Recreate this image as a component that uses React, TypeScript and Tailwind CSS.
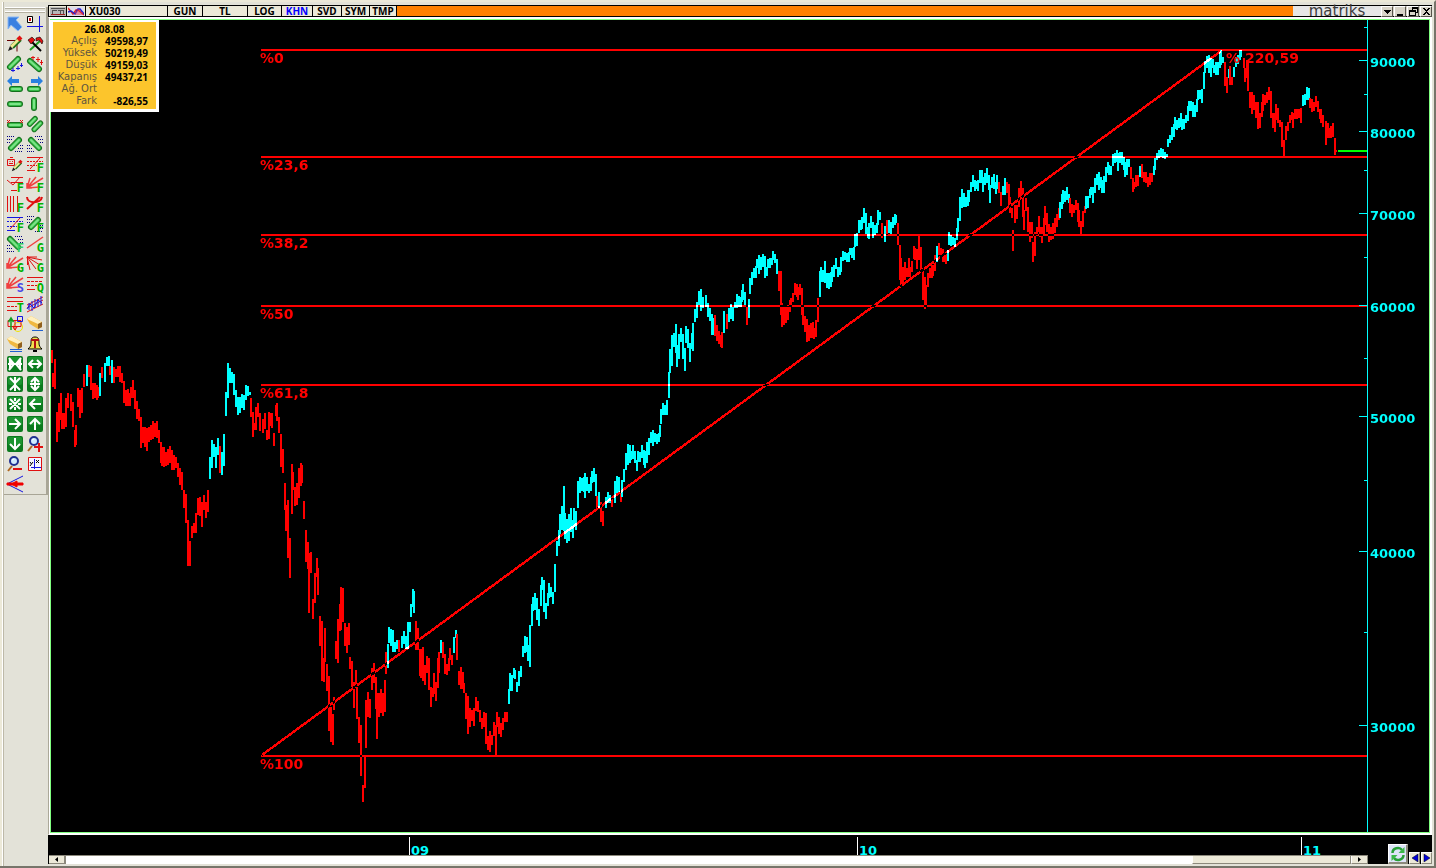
import type { ReactNode } from "react";

/* Each run is a colour letter (R falling, C rising) followed by "x,high,low" bars. */
const RUNS = `
R 51,350,363 52,373,387 54,359,389 56,412,442 58,403,432 60,393,420 61,413,429 63,413,429 65,398,427 67,393,408 70,394,411 72,402,427 74,430,447 75,425,445 77,388,407 79,390,418 81,388,413 83,374,387
C 86,365,386
R 88,365,377 90,366,390 92,383,399 94,383,398 96,385,400 97,387,398
C 99,373,396
R 101,367,378
C 104,363,382 106,357,366 108,356,366
R 109,366,375
C 111,360,383
R 113,367,383 115,369,377 117,366,377 119,366,382 121,373,383 123,381,403 125,390,406 127,389,406 129,393,406 130,387,398 132,380,398 134,390,409 136,401,419 138,409,421 140,417,448 142,427,443 144,427,447 146,428,451 148,427,442 150,425,440 152,421,439 154,423,437 156,421,438 158,430,443 160,442,463 161,447,466 163,447,467 165,452,466 167,449,465 169,446,463 171,450,470 173,455,470 175,457,468 177,463,477 179,468,485 181,472,490 183,490,508 185,494,523 187,520,566 189,541,566 191,526,538 193,523,533 195,513,533 197,498,515 199,497,516 201,502,527 203,495,510 205,502,518 207,490,512
C 209,457,479 211,440,468 213,444,457 215,447,468 217,438,455
R 219,446,473
C 221,452,475 223,434,466 225,392,416 227,363,398 229,368,383 231,372,383 233,374,395 235,390,407 237,397,415 239,397,413 241,394,408 243,395,410 245,385,400 247,386,396 249,392,395
R 250,398,417 252,412,437 254,423,430 255,407,430 257,403,417 259,413,431 262,419,433 264,413,429 266,430,440 268,412,439 270,413,426 271,413,428 273,433,446 275,405,416 276,403,421 278,417,433 280,434,467 282,449,473 284,483,510 285,505,531 287,500,558 289,538,578 291,464,514 292,472,490 294,487,506 296,483,505 298,468,498 300,463,486 301,465,483 303,501,519 305,530,562 307,542,569 308,553,613 310,552,573 312,599,619 314,573,603 316,558,577 317,568,595 319,616,646 321,621,681 323,658,682 324,628,662 326,664,691 328,676,731 330,707,742 332,714,745 333,697,710 335,641,659 337,619,663 339,604,631 340,587,630 342,588,622 344,623,646 346,627,653 348,623,645 349,657,669 351,661,687 353,682,708 355,670,687 356,687,719 358,717,743 360,725,776 362,785,802 364,757,788 365,700,748 367,692,717 369,699,718 371,668,690 373,663,683 375,677,709 376,693,739 378,693,717 380,689,713 382,693,716 384,680,712 385,652,674
C 387,644,668 388,627,643 390,629,646 392,630,652 394,642,652 396,640,649
R 398,640,652
C 401,636,648 403,631,644 405,636,649 407,622,649 409,622,632 410,604,617 412,589,607 413,591,613
R 415,621,650 417,628,650 419,649,676 420,649,678 422,647,681 424,665,685 426,656,673 428,658,690 430,687,707 432,688,697 433,673,694 435,682,701 437,658,688 438,652,673
C 440,640,653
R 442,642,658 444,654,674 446,664,675 448,658,671 449,648,660 451,655,665
C 453,637,653 455,630,638
R 456,634,660 458,671,685 460,667,689 462,672,689 463,683,693 465,693,719 467,696,734 469,708,727 471,710,721 473,708,726 475,697,711 477,701,712 479,710,722 481,718,729 483,712,727 485,713,744 487,736,750 489,731,752 491,735,745 493,722,736 495,725,755 496,712,727 498,717,734 500,723,737 502,718,730 504,712,722 506,712,722
C 508,689,704 509,673,691 511,675,691 513,668,678 514,670,679 516,682,692 518,671,686 520,666,677 522,646,657 524,636,653 526,637,652 527,645,661 529,625,667 531,604,626 532,597,611 534,593,610 536,598,620 538,609,626 540,585,606 541,577,590 543,580,612 545,603,619 547,593,606 548,583,598 550,587,597 552,592,604 554,564,592 556,541,556 558,530,546 559,514,534 561,506,530 563,486,531 564,513,539 566,519,543 568,514,541 570,508,532 572,520,538 573,508,527 575,511,530 577,481,508 579,477,493 581,478,491 583,477,492 584,473,498 586,477,491 588,484,493 590,477,491 591,471,483 593,468,482 595,474,496
R 596,496,508
C 598,492,508
R 600,502,522 602,511,526
C 605,497,508 607,492,503 609,495,503
R 611,498,507
C 614,481,503 616,476,493 618,477,492
R 620,490,502
C 621,480,497 623,469,482 625,453,470 627,444,465 629,445,463 630,451,460 632,445,459 634,451,463 636,460,471 637,451,462 639,452,462 641,445,458 643,450,465 644,451,468 646,442,463 648,438,455 650,432,443 652,430,446 654,433,442 656,434,444 658,433,442 659,425,437 660,409,424 662,403,415 664,405,415 666,400,415 668,372,398 669,349,373 671,335,366 673,333,347 675,324,353 676,345,367 678,334,359 680,328,342 682,334,359 684,348,371 685,326,343 687,329,348 689,343,362 691,333,349 692,323,351 694,309,322 696,302,318 698,291,305 700,289,311 702,297,308 705,295,307 707,303,317 709,308,321 711,314,335 713,318,335
R 714,315,336 716,325,341 718,331,344 720,335,347 721,332,348
C 723,311,333
R 726,314,329
C 728,308,322 730,304,319 732,307,321 734,302,308 736,294,308 738,296,307 740,297,307 741,290,302 742,284,300 744,292,305
R 746,305,325
C 748,299,318 749,278,294 751,272,285 753,268,278 755,266,278 756,259,268 758,255,274 760,257,270 762,254,267 764,256,278 766,267,276 767,259,268 769,258,268 771,258,265 772,251,260 774,254,263 776,259,274
R 778,271,291 780,271,315 781,303,327 783,305,325 785,305,323 787,306,320 789,300,312 790,298,307 792,293,302 794,283,295 796,284,297 797,287,300 799,284,295 801,288,315 802,305,325 804,316,332 806,319,342 808,325,341 810,323,338 812,322,338 813,328,339 815,320,337 817,298,322
C 819,271,297 820,267,282 822,270,282 824,261,283 826,273,288 828,273,289 830,272,287 831,267,282 833,265,277 835,258,269 837,267,277 839,267,275 840,257,272 842,251,261 844,252,260 846,253,262 848,252,262 849,248,255 851,248,258 853,247,260 854,234,247 856,233,246 858,220,233 860,220,230 861,217,229 863,208,223 865,213,234 867,227,238 868,223,239 870,216,228 872,222,238 874,225,235 876,223,233 877,210,225 879,212,220
R 881,223,238
C 884,226,242
R 886,220,235
C 888,220,233 890,222,234 892,217,228 894,214,225 895,215,223
R 897,223,245 899,245,280 900,258,287 902,267,283 904,262,280 906,268,277 908,258,277 909,267,277 911,261,272 913,246,259 914,248,260 916,249,269 918,236,260 920,247,272 922,268,300 924,277,309 925,285,307 927,273,287 929,268,278 931,265,278 932,265,276 934,255,271
C 936,246,262
R 938,243,255 940,248,258 942,249,262 943,252,262 945,253,264
C 947,250,261 948,232,245 950,235,246 952,237,245 954,238,247 956,228,240 957,218,232 959,197,221 961,189,208 963,193,207 965,197,207 967,190,206 968,190,202 970,182,192 972,175,187 974,180,191 976,181,189 977,180,191 979,170,183 981,170,183 982,177,192 984,173,185 986,168,183 988,175,190 989,185,203 991,177,188 993,174,189 995,182,194 996,175,189
R 998,182,193 1000,192,206
C 1002,186,195 1004,178,195
R 1006,182,193 1008,184,205 1009,197,213 1011,208,218 1012,230,251 1014,205,223 1016,205,219 1018,188,207 1020,181,197 1022,188,217 1023,210,230 1025,198,211 1027,207,232 1029,222,242 1031,222,238 1032,242,262 1034,232,256 1036,227,235 1038,216,232 1039,227,237 1041,227,243 1043,218,234 1044,206,225 1046,213,232 1048,224,242 1050,227,240 1052,223,239 1054,218,233 1056,214,227 1058,208,220
C 1059,202,218 1061,194,209 1062,190,204 1064,191,202 1066,187,200 1068,194,203
R 1069,198,213 1071,204,217 1073,205,213 1075,200,210 1077,203,222 1078,210,227 1080,221,234 1082,211,227 1084,206,213
C 1085,196,209 1087,196,208 1089,189,198 1090,187,195 1092,187,203 1094,178,193 1096,174,185 1098,172,190 1100,177,188 1101,180,193 1103,176,193 1105,167,182 1107,162,173 1108,165,175 1110,166,175 1112,154,166 1114,153,163 1116,150,162 1117,153,171 1119,152,163 1121,152,165 1123,157,170 1124,162,177 1126,159,175 1128,159,167
R 1130,167,179 1132,178,192 1133,182,189 1135,175,187 1137,175,186
C 1139,166,177
R 1141,164,178 1143,172,182 1145,172,183 1147,177,187 1149,173,185 1151,173,182
C 1153,166,175 1154,158,170 1156,153,160 1158,150,158 1160,148,157 1162,149,158 1164,152,159 1166,154,157 1167,139,147 1169,135,143 1171,127,140 1173,124,137 1174,117,129 1176,120,130 1178,118,128 1180,113,127 1181,119,130 1183,119,129 1185,115,123 1187,106,121 1188,101,111 1190,101,111 1192,102,117 1194,105,117 1196,99,112 1197,90,100 1199,90,99 1201,89,103 1203,72,89 1204,61,73 1206,56,68 1208,55,73 1210,58,77 1212,59,68 1213,65,73 1215,62,75 1217,62,75 1219,52,68 1220,50,65 1222,57,63
R 1224,62,86 1226,77,93
C 1228,69,78
R 1229,66,85 1231,77,85
C 1233,67,77 1235,57,67 1237,55,64 1239,50,60 1240,50,57
R 1243,58,68 1244,68,82 1246,60,78 1247,60,91 1249,92,108 1251,92,114 1253,95,110 1255,102,118 1257,102,129 1259,113,128 1261,102,117 1262,94,111 1264,95,105 1266,92,103 1268,87,100 1270,91,118 1272,113,128 1274,113,132 1275,104,120 1277,108,123 1279,120,127 1281,122,147 1283,140,156 1285,126,140 1287,122,131 1289,115,123 1291,112,120 1292,113,128 1294,109,119 1296,109,119 1298,109,118 1300,108,123
C 1302,95,106 1304,94,105 1306,87,100 1308,88,100
R 1309,98,108 1311,99,112 1313,102,111 1315,96,107 1317,101,112 1319,109,119 1320,109,123 1322,115,127 1325,121,145 1327,123,138 1329,128,138 1330,126,138 1332,123,137 1334,138,155 1335,150,152`;

const bars = RUNS.trim()
  .split("\n")
  .map((line) => {
    const [tone, ...items] = line.split(" ");
    const d = items
      .map((item) => {
        const [x, hi, lo] = item.split(",").map(Number);
        return `M${x} ${hi}h2V${lo}h-2z`;
      })
      .join("");
    return { fill: tone === "R" ? "#ff0000" : "#00ffff", d };
  });

const levels = [
  { y: 50, label: "%0" },
  { y: 157, label: "%23,6" },
  { y: 235, label: "%38,2" },
  { y: 306, label: "%50" },
  { y: 385, label: "%61,8" },
  { y: 756, label: "%100" },
];

const prices = [
  { y: 60, label: "90000" },
  { y: 131, label: "80000" },
  { y: 213, label: "70000" },
  { y: 305, label: "60000" },
  { y: 416, label: "50000" },
  { y: 551, label: "40000" },
  { y: 725, label: "30000" },
];
const minorTicks = [27, 94, 170, 257, 358, 480, 632];

const years = [
  { x: 409, label: "09" },
  { x: 857, label: "10" },
  { x: 1301, label: "11" },
];

const quote = [
  ["Açılış", "49598,97"],
  ["Yüksek", "50219,49"],
  ["Düşük", "49159,03"],
  ["Kapanış", "49437,21"],
  ["Ağ. Ort", ""],
  ["Fark", "-826,55"],
];

/* ---------- toolbar drawings, all on a 16x16 grid ---------- */

const RED = "#e01010";
const BLUE = "#1414e0";

function Stick({ d }: { d: string }) {
  return (
    <g fill="none" strokeLinecap="round">
      <path d={d} stroke="#14701c" strokeWidth="6" />
      <path d={d} stroke="#34b844" strokeWidth="4" />
      <path d={d} stroke="#7ce488" strokeWidth="2" />
    </g>
  );
}

function Mark({ children, fill = "#00b400" }: { children: string; fill?: string }) {
  return (
    <text x="17" y="16" textAnchor="end" fontFamily="DejaVu Sans Mono, monospace" fontWeight="700" fontSize="12" fill={fill}>
      {children}
    </text>
  );
}

function Dots({ d }: { d: string }) {
  return <path d={d} stroke="#000080" strokeWidth="1" strokeDasharray="1 1" fill="none" shapeRendering="crispEdges" />;
}

function Tile({ d }: { d: string }) {
  return (
    <>
      <rect width="16" height="16" rx="2" fill="#0b7a1e" />
      <rect x="1" y="1" width="14" height="8" rx="2" fill="#1c9430" />
      <path d={d} stroke="#ffffff" strokeWidth="2" fill="none" />
    </>
  );
}

const upRight = "M4 12L12 4";
const downRight = "M4 4L12 12";
const upDots = <Dots d="M0 .5h8M0 3.5h5M0 6.5h3M13 9.5h3M11 12.5h5M8 15.5h8" />;
const downDots = <Dots d="M8 .5h8M11 3.5h5M13 6.5h3M0 9.5h3M0 12.5h5M0 15.5h8" />;
const fan = <path d="M0 12L16 2M0 12L9 1M0 12L3 2M0 12L13 11M0 7v5h5" stroke="#f04040" strokeWidth="1.5" fill="none" />;

const pencil = (
  <>
    <path d="M5 11L13 3" stroke="#187018" strokeWidth="5" />
    <path d="M4 11L12 3" stroke="#f0e890" strokeWidth="3" />
    <path d="M11 4l3-3" stroke={RED} strokeWidth="4" />
    <path d="M1 15l2-5 3 3z" fill="#202020" />
  </>
);

const eraser = (
  <>
    <path d="M0 3l4-3 11 6v5l-4 2-8-5z" fill="#f0b840" />
    <path d="M0 3l4-3 11 6-4 2z" fill="#fff0c0" />
    <path d="M11 8l4-2v5l-4 2z" fill="#906020" />
  </>
);

const lens = (
  <>
    <path d="M5 10l-4 5" stroke="#b06820" strokeWidth="2" />
    <circle cx="7" cy="5" r="4" fill="#d0ecff" stroke="#203090" strokeWidth="2" />
    <path d="M5 4l2-1" stroke="#ffffff" strokeWidth="1" />
  </>
);

const tools: [string, ReactNode][] = [
  ["Seçim", <path d="M1 1h11l-3 3 6 7-4 4-7-6-3 4z" fill="#3a80e0" stroke="#8ab8f4" />],
  ["İmleç", <><path d="M.5 .5h5v6h-5z" fill="#fff" stroke="#000" /><path d="M3 2v3" stroke={RED} strokeWidth="2" /><path d="M12.5 0v16M0 10.5h16" stroke={BLUE} /></>],
  ["Kalem", <><path d="M0 4.5h10v11" stroke="#600" fill="none" />{pencil}</>],
  ["Araçlar", <><path d="M3 14L13 5" stroke="#20a020" strokeWidth="2" /><path d="M4 5l10 10" stroke="#000" strokeWidth="2" /><path d="M1 4l4-3 3 3-4 4zM9 2l4-1 3 4-1 3-3-4-3 1z" fill={RED} stroke="#000" strokeWidth=".6" /></>],
  ["Yükselen kanal", <><Stick d="M3 11L11 3" /><path d="M4 14.500h4M6 12v4M9 12.500h4M11 10v4M13 9.500h3M14.500 7v4" stroke={BLUE} /></>],
  ["Düşen kanal", <><Stick d="M3 5L12 13" /><path d="M4 1.500h4M6 0v4M9 3.500h4M11 1v5M13 6.500h3M14.500 4v5" stroke={RED} /></>],
  ["Sola uzat", <><Stick d="M5 13h8" /><path d="M0 5l5-5v3h7v4h-7v3z" fill="#2a80e0" /></>],
  ["Sağa uzat", <><Stick d="M3 13h8" /><path d="M16 5l-5-5v3h-7v4h7v3z" fill="#2a80e0" /></>],
  ["Yatay çizgi", <Stick d="M3 8h10" />],
  ["Dikey çizgi", <Stick d="M7 4v8" />],
  ["Doğru parçası", <><Stick d="M3 9h10" /><path d="M0 4l3 3M3 4l-3 3M13 4l3 3M16 4l-3 3" stroke={RED} /></>],
  ["Paralel çizgi", <g transform="scale(.9)"><Stick d="M3 9L9 3" /><Stick d="M8 15L15 8" /></g>],
  ["Yükselen bant", <>{upDots}<Stick d={upRight} /></>],
  ["Düşen bant", <>{downDots}<Stick d={downRight} /></>],
  ["Otomatik çizim", <><path d="M.5 3.500h7v6h-7zM3 1.500h3M2.500 5.500h1M5 5.500h1M2 7.500h4" fill="none" stroke={RED} /><g transform="translate(4 4) scale(.75)">{pencil}</g></>],
  ["Fibonacci düzeltme", <><path d="M0 1.500h16M0 14.500h8M3 13L13 2" stroke={RED} /><path d="M0 5.500h16M0 9.500h10" stroke={RED} strokeDasharray="2 1" /><Mark>F</Mark></>],
  ["Fibonacci uzatma", <><path d="M4 1.500h12M4 6.500h12M4 14.500h6M0 4l6 5 7-8" stroke={RED} fill="none" /><Mark>F</Mark></>],
  ["Fibonacci yelpaze", <>{fan}<Mark>F</Mark></>],
  ["Fibonacci zaman", <><path d="M.5 0v16M3.500 0v16M6.500 0v16M10.500 0v16" stroke={RED} /><Mark>F</Mark></>],
  ["Fibonacci yay", <><path d="M0 1c0 7 14 7 15 0M0 13L13 1" stroke={RED} strokeWidth="2" fill="none" /><Mark>F</Mark></>],
  ["Fibonacci kanal", <><path d="M0 1.500h16M0 14.500h8" stroke={BLUE} /><path d="M0 5.500h16M0 10.500h10" stroke={BLUE} strokeDasharray="2 1" /><path d="M3 13L13 2" stroke={RED} /><Mark>F</Mark></>],
  ["Fibonacci yükselen bant", <>{upDots}<Stick d="M4 11L11 4" /><Mark>F</Mark></>],
  ["Fibonacci düşen bant", <>{downDots}<Stick d="M3 3l8 8" /><Mark fill="#30d060">F</Mark></>],
  ["Gann çizgisi", <><path d="M0 12L16 1" stroke="#f04040" strokeWidth="1.500" /><Mark>G</Mark></>],
  ["Gann yelpaze", <>{fan}<Mark>G</Mark></>],
  ["Gann ışınları", <><path d="M0 1l15 3M0 1l13 8M0 1l9 12M0 1l3 13M0 1h10M.500 0v9" stroke={RED} fill="none" /><Mark>G</Mark></>],
  ["Hız çizgileri", <>{fan}<Mark fill="#4848e8">S</Mark></>],
  ["Dörtlük çizgileri", <><path d="M0 1.500h16M0 13.500h8" stroke={RED} /><path d="M0 5.500h16M0 9.500h10" stroke={RED} strokeDasharray="3 1" /><Mark>Q</Mark></>],
  ["Üçlük çizgileri", <><path d="M0 1.500h16M0 5.500h16M0 14.500h10" stroke={RED} /><path d="M0 10.500h10" stroke={RED} strokeDasharray="3 1" /><Mark>T</Mark></>],
  ["Regresyon", <><path d="M0 9L16 1M0 12L16 4M0 16L16 8" stroke={RED} /><path d="M2 7v7M5 5v10M8 3v9M11 3v8M14 0v9M0 13l3-5 4 4 4-8 4 3" stroke={BLUE} fill="none" /></>],
  ["Şekiller", <><circle cx="11" cy="11" r="4.500" fill="none" stroke="#f0e000" /><path d="M1 4.500h13v6H1z" fill="none" stroke={RED} /><path d="M10.500 .500h5v5h-5z" fill="none" stroke={BLUE} /><path d="M4 14V3M1.500 6L4 2l2.500 4" stroke="#10a020" fill="none" strokeWidth="1.500" /><path d="M8 4v10M6 11l2 3 2-3" stroke={RED} fill="none" /></>],
  ["Sil", <>{eraser}<path d="M5 14.500h11" stroke="#2060d0" /></>],
  ["Tümünü sil", <>{eraser}<path d="M3 13.500h12M3 15.500h12" stroke="#2060d0" /></>],
  ["Alarm", <><path d="M8 1c4 0 4 3 4 6s1 4 3 6H1c2-2 3-3 3-6s0-6 4-6z" fill="#f0e050" stroke="#000" /><path d="M4 4h8M8 3v9" stroke="#b01010" strokeWidth="2" /><path d="M6 15h4" stroke="#000" strokeWidth="2" /></>],
  ["Yatay daralt", <Tile d="M2 2l5 6-5 6M14 2L9 8l5 6M3 4v8M13 4v8M1 8h14" />],
  ["Yatay genişlet", <Tile d="M6 4L2 8l4 4M10 4l4 4-4 4M3 8h10" />],
  ["Dikey daralt", <Tile d="M3 2l5 5 5-5M3 14l5-5 5 5M8 1v14" />],
  ["Dikey genişlet", <Tile d="M4 6l4-4 4 4M4 10l4 4 4-4M3 8h10M8 3v10" />],
  ["Sığdır", <Tile d="M3 3l10 10M13 3L3 13M8 2v3M8 11v3M2 8h3M11 8h3" />],
  ["Sola", <Tile d="M8 3L3 8l5 5M3 8h11" />],
  ["Sağa", <Tile d="M8 3l5 5-5 5M13 8H2" />],
  ["Yukarı", <Tile d="M3 8l5-5 5 5M8 3v11" />],
  ["Aşağı", <Tile d="M3 8l5 5 5-5M8 13V2" />],
  ["Yakınlaştır", <>{lens}<path d="M7 11h9M12 7v9" stroke={RED} strokeWidth="2" /></>],
  ["Uzaklaştır", <>{lens}<path d="M6 13h9" stroke={RED} strokeWidth="2" /></>],
  ["Eksenler", <><path d="M1.500 1.500h13v13h-13z" fill="#f4f4ff" stroke={RED} /><path d="M7.500 3v10M4 11.500h10" stroke={BLUE} /><path d="M9 4l3 3M12 4L9 7M3 6l1.500 2M6 6l-3 4" stroke="#000" /></>],
  ["Projeksiyon", <><path d="M0 8L16 0M0 8l16 8" stroke={BLUE} /><path d="M0 7h6l4-2v2h6v2h-6v2L6 9H0z" fill="#f00000" stroke="#f00000" /></>],
];

function TitleCell({ className, children }: { className: string; children: ReactNode }) {
  return (
    <button
      type="button"
      className={`h-full shrink-0 border-r border-b border-black bg-[#ece9d8] font-['Noto_Sans',sans-serif] text-[10px] leading-[10px] font-bold ${className}`}
    >
      {children}
    </button>
  );
}

function CaptionButton({ label, d }: { label: string; d: string }) {
  return (
    <button
      type="button"
      aria-label={label}
      className="flex h-[11px] w-3 shrink-0 items-center justify-center border-t border-r border-b border-l border-t-white border-r-[#55534a] border-b-[#55534a] border-l-white bg-[#d8d4c8]"
    >
      <svg viewBox="0 0 9 9" className="size-[9px]" shapeRendering="crispEdges">
        <path d={d} fill="#000" fillRule="evenodd" />
      </svg>
    </button>
  );
}

function PriceChart() {
  return (
    <svg viewBox="51 20 1378 812" preserveAspectRatio="none" className="absolute inset-0 size-full isolate" shapeRendering="crispEdges" role="img" aria-label="XU030">
      <rect x="51" y="20" width="1378" height="812" fill="#000" />
      {bars.map((run, i) => (
        <path key={i} d={run.d} fill={run.fill} />
      ))}
      {levels.map((level) => (
        <rect key={level.label} x="261" y={level.y - 1} width="1106" height="2" fill="#f00" className="mix-blend-difference" />
      ))}
      <path d="M262 755L1221 51" stroke="#f00" strokeWidth="2.4" className="mix-blend-difference" />
      <g fill="#f00" fontFamily="DejaVu Sans, Verdana, sans-serif" fontSize="14" fontWeight="700">
        {levels.map((level) => (
          <text key={level.label} x="260" y={level.y + 13}>
            {level.label}
          </text>
        ))}
        <text x="1226" y="63">% 220,59</text>
      </g>
      <rect x="1338" y="150" width="29" height="2" fill="#0f0" />
      <g fill="#0ff">
        <rect x="1367" y="20" width="1" height="812" />
        {prices.map((p) => (
          <rect key={p.y} x="1359" y={p.y} width="8" height="1" />
        ))}
        {minorTicks.map((y) => (
          <rect key={y} x="1364" y={y} width="3" height="1" />
        ))}
        <g fontFamily="DejaVu Sans, Verdana, sans-serif" fontSize="13" fontWeight="700">
          {prices.map((p) => (
            <text key={p.label} x="1370" y={p.y + 7}>
              {p.label}
            </text>
          ))}
        </g>
      </g>
    </svg>
  );
}

function QuoteBox() {
  return (
    <div className="absolute top-0 -left-px w-[109px] border-[3px] border-t-2 border-white bg-[#fcc52c] pt-px pb-[2px]">
      <table className="w-full border-collapse text-[10px] leading-3">
        <caption className="font-['Noto_Sans',sans-serif] font-bold text-black">26.08.08</caption>
        <tbody>
          {quote.map(([name, value]) => (
            <tr key={name} className="h-3">
              <th scope="row" className="w-11 p-0 text-right font-['DejaVu_Sans',sans-serif] font-normal whitespace-nowrap text-[#5e5540]">
                {name}
              </th>
              <td className="p-0 pr-2 text-right font-['Noto_Sans',sans-serif] font-bold text-black">{value}</td>
            </tr>
          ))}
        </tbody>
      </table>
    </div>
  );
}

export default function App() {
  return (
    <div className="flex h-screen overflow-hidden border-t-2 border-r-2 border-b-2 border-t-[#ece9d8] border-r-[#77756a] border-b-[#77756a] bg-[#e3e2d8]">
      <div className="w-1 shrink-0 border-l-2 border-r border-l-[#ece9d8] border-r-[#bdb9a8] bg-white" />
      <aside className="w-11 shrink-0 pt-[3px]">
        <div className="border-r-2 border-b border-[#a8a596] bg-[#e3e2d8]">
          <div className="mx-px mt-[2px] h-[2px] border-t border-b border-t-white border-b-[#b4b0a0]" />
          <div className="mx-px mt-[2px] mb-px h-[2px] border-t border-b border-t-white border-b-[#b4b0a0]" />
          <div className="grid grid-cols-[20px_20px] pl-px">
            {tools.map(([label, art]) => (
              <button key={label} type="button" aria-label={label} className="flex size-5 items-center justify-center">
                <svg viewBox="0 0 16 16" className="size-4 overflow-visible">
                  {art}
                </svg>
              </button>
            ))}
          </div>
        </div>
      </aside>

      <main className="flex min-w-0 flex-1 flex-col pt-[3px] pr-[2px] pb-[2px]">
        <header className="flex h-3 shrink-0 border-t border-l border-black bg-[#ff8000] text-black">
          <TitleCell className="flex w-[18px] items-center justify-center">
            <svg viewBox="0 0 16 9" className="h-[9px] w-4 shrink-0" shapeRendering="crispEdges">
              <rect width="16" height="9" fill="#b8b8b8" />
              <path d="M1 1h14v1H1zM2 3h5v1H3v3H2zM8 3h6v4h-1V4h-2v3h-1V4H8z" fill="#505050" />
              <path d="M1 7h14v1H1z" fill="#a02020" />
            </svg>
          </TitleCell>
          <TitleCell className="flex w-[19px] items-center justify-center">
            <svg viewBox="0 0 16 9" className="h-[9px] w-4 shrink-0">
              <rect width="16" height="9" fill="#dcdcec" />
              <path d="M0 1l5 6 3-4 2 0 6 5" stroke="#e02020" strokeWidth="1.500" fill="none" />
              <path d="M0 5l3-1 4 3 3-5 2 0 4 5" stroke="#2020d0" strokeWidth="1.500" fill="none" />
              <path d="M8 4v4M10 2v6M12 3v5M14 5v3" stroke="#e03050" />
            </svg>
          </TitleCell>
          <TitleCell className="w-[82px] pl-[3px] text-left">XU030</TitleCell>
          <TitleCell className="w-[35px]">GUN</TitleCell>
          <TitleCell className="w-[45px]">TL</TitleCell>
          <TitleCell className="w-[34px]">LOG</TitleCell>
          <TitleCell className="w-[31px] text-[#0000ff]">KHN</TitleCell>
          <TitleCell className="w-[29px]">SVD</TitleCell>
          <TitleCell className="w-7">SYM</TitleCell>
          <TitleCell className="w-[27px]">TMP</TitleCell>
          <div className="min-w-0 flex-1 border-b border-black" />
          <div className="flex h-full w-[88px] shrink-0 items-center justify-center border-b border-black bg-[#e6e6e6] font-['DejaVu_Sans',sans-serif] text-[15px] leading-[10px] text-[#3c3c3c]">
            matriks
          </div>
          <div className="flex h-full shrink-0 gap-px border-b border-black bg-[#d8d4c8]">
            <CaptionButton label="Menü" d="M1 3h7v1H7v1H6v1H5v1H4V6H3V5H2V4H1z" />
            <CaptionButton label="Simge durumuna küçült" d="M1 7h6v2H1z" />
            <CaptionButton label="Önceki boyut" d="M3 0h6v6H7v3H0V3h3zM4 2v1h3v2h1V2zM1 5v3h5V5z" />
            <CaptionButton label="Kapat" d="M1 1h2v1h1v1h1V2h1V1h2v1H7v1H6v1H5v1h1v1h1v1h1v1H6V7H5V6H4v1H3v1H1V7h1V6h1V5h1V4H3V3H2V2H1z" />
          </div>
        </header>

        <div className="flex min-h-0 flex-1 border-t border-b border-l border-t-white border-b-white border-l-[#aca899] bg-white pt-px pr-[2px] pb-px pl-px">
          <section className="relative flex-1 border border-[#80ff80] bg-black">
            <PriceChart />
            <QuoteBox />
          </section>
        </div>

        <footer className="flex h-[29px] shrink-0 bg-black">
          <div className="flex min-w-0 flex-1 flex-col">
            <svg viewBox="48 835 1320 20" preserveAspectRatio="none" className="h-5 w-full overflow-visible" shapeRendering="crispEdges">
              {years.map((year) => (
                <g key={year.label}>
                  <rect x={year.x} y="837" width="1" height="18" fill="#fff" />
                  <text x={year.x + 2} y="855" fill="#0ff" fontFamily="DejaVu Sans, Verdana, sans-serif" fontSize="13" fontWeight="700">
                    {year.label}
                  </text>
                </g>
              ))}
            </svg>
            <div className="ml-px flex h-[9px] border-t border-[#8c897c] bg-white">
              <button type="button" aria-label="Sola kaydır" className="flex h-2 w-[17px] items-center justify-center border-r-2 border-b border-[#8c897c] bg-[#ece9d8]">
                <svg viewBox="0 0 3 5" className="h-[5px] w-[3px]">
                  <path d="M3 0v5L0 2.500z" />
                </svg>
              </button>
              <div className="flex-1" />
              <div className="h-2 w-[159px] border-r border-b border-l border-[#8c897c] border-l-white bg-[#ece9d8]" />
              <button type="button" aria-label="Sağa kaydır" className="flex h-2 w-[17px] items-center justify-center border-r border-b border-l border-[#8c897c] border-l-white bg-[#ece9d8]">
                <svg viewBox="0 0 3 5" className="h-[5px] w-[3px]">
                  <path d="M0 0v5l3-2.500z" />
                </svg>
              </button>
            </div>
          </div>
          <div className="flex w-16 shrink-0 items-end justify-end gap-px">
            <button type="button" aria-label="Yenile" className="flex size-5 items-center justify-center border-t border-r-2 border-b-2 border-l border-t-white border-r-[#8c897c] border-b-[#8c897c] border-l-white bg-[#dfe4f8]">
              <svg viewBox="0 0 16 16" className="size-4" fill="none" stroke="#28a038" strokeWidth="2.500">
                <path d="M2.500 7c0-5 7-6.500 9.500-3M13.500 9c0 5-7 6.500-9.500 3" />
                <path d="M14.500 1v6h-6zM1.500 15V9h6z" fill="#3cb84a" stroke="none" />
              </svg>
            </button>
            {[
              ["Geri", "M7 0v8L1 4z"],
              ["İleri", "M1 0v8l6-4z"],
            ].map(([label, d]) => (
              <button key={label} type="button" aria-label={label} className="flex h-3 w-[11px] items-center justify-center border-t border-r border-b border-l border-t-white border-r-[#8c897c] border-b-[#8c897c] border-l-white bg-[#ece9d8]">
                <svg viewBox="0 0 8 8" className="size-2">
                  <path d={d} fill="#0000d8" stroke="#000" strokeWidth=".5" />
                </svg>
              </button>
            ))}
          </div>
        </footer>
      </main>
    </div>
  );
}
